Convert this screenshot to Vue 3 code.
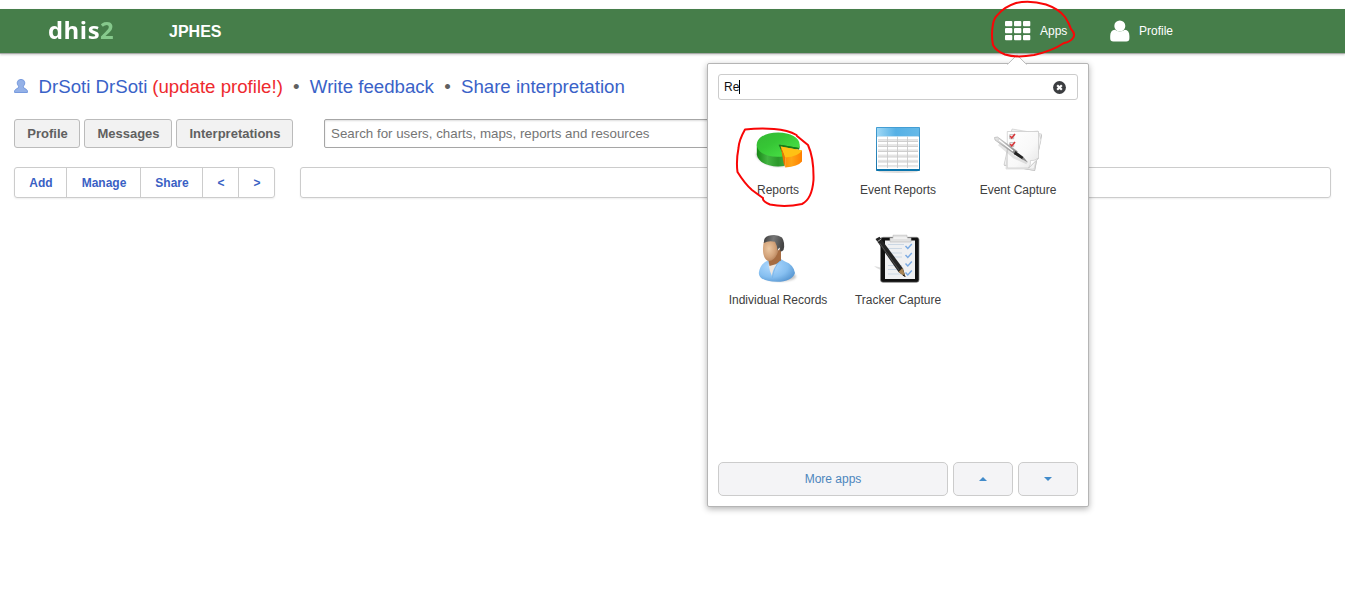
<script setup>
import { ref } from 'vue'

const query = ref('Re')
const tabs = [
  { label: 'Profile', width: 66 },
  { label: 'Messages', width: 88 },
  { label: 'Interpretations', width: 117 },
]
const actions = [
  { label: 'Add', width: 52 },
  { label: 'Manage', width: 74 },
  { label: 'Share', width: 62 },
  { label: '<', width: 36 },
  { label: '>', width: 35 },
]
const apps = [
  { name: 'Reports', icon: 'pie' },
  { name: 'Event Reports', icon: 'table' },
  { name: 'Event Capture', icon: 'paper' },
  { name: 'Individual Records', icon: 'person' },
  { name: 'Tracker Capture', icon: 'clipboard' },
]
const cells = [0, 9, 18]
</script>

<template>
  <div class="page">
    <header class="bar">
      <div class="logo">dhis<span>2</span></div>
      <div class="title">JPHES</div>
      <nav class="menu">
        <a class="entry apps-entry">
          <svg width="26" height="20" viewBox="0 0 26 20" fill="#fff">
            <template v-for="x in cells" :key="x">
              <rect v-for="y in [0, 7, 14]" :key="y" :x="x" :y="y" width="7.300" height="5.300" rx="1" />
            </template>
          </svg>
          <span>Apps</span>
        </a>
        <a class="entry profile-entry">
          <svg width="20" height="22" viewBox="0 0 20 22" fill="#fff">
            <path d="M5 9.800Q.2 10.300.2 16v2.300Q.2 21.500 3.300 21.500h13Q19.400 21.500 19.400 18.300V16Q19.400 10.300 14.800 9.800Q12.800 11.500 9.800 11.500T5 9.800Z" />
            <circle cx="9.800" cy="6" r="5.500" />
          </svg>
          <span>Profile</span>
        </a>
      </nav>
    </header>

    <main class="content">
      <div class="links">
        <svg class="user" width="15" height="16" viewBox="0 0 15 16">
          <path d="M.6 13.500V11.800Q1 10.300 4.200 9L4.700 7.200Q3.200 6 3.200 3.800Q3.500.4 7 .4T10.800 3.800Q10.800 6 9.300 7.200L9.800 9Q13 10.300 13.400 11.800V13.500Z" fill="#94b1e7" stroke="#779ade" />
        </svg>
        <a class="name">DrSoti DrSoti</a>
        <a class="update">(update profile!)</a>
        <i>•</i>
        <a>Write feedback</a>
        <i>•</i>
        <a>Share interpretation</a>
      </div>

      <div class="tabs">
        <button v-for="t in tabs" :key="t.label" :style="{ width: t.width + 'px' }">{{ t.label }}</button>
        <input class="search" placeholder="Search for users, charts, maps, reports and resources" />
      </div>

      <div class="dash">
        <div class="actions">
          <a v-for="a in actions" :key="a.label" :style="{ width: a.width + 'px' }">{{ a.label }}</a>
        </div>
        <div class="strip"></div>
      </div>
    </main>

    <section class="popup">
      <svg class="arrow" width="20" height="11" viewBox="0 0 20 11">
        <path d="M.5 10.500L10 .8L19.500 10.500" fill="#fff" stroke="#bbb" />
        <path d="M1.500 10.500h17" stroke="#fff" stroke-width="1.500" />
      </svg>
      <div class="filter">
        <span class="typed">{{ query }}</span>
        <svg width="13" height="13" viewBox="0 0 13 13">
          <circle cx="6.500" cy="6.500" r="6.400" fill="#3b3d40" />
          <path d="M4.200 4.200l4.600 4.600M8.800 4.200L4.200 8.800" stroke="#fff" stroke-width="2.200" />
        </svg>
      </div>

      <div class="grid">
        <div v-for="app in apps" :key="app.name" class="app">
          <svg v-if="app.icon === 'pie'" width="48" height="48" viewBox="0 0 48 48">
            <defs>
              <linearGradient id="pieTop" x2="1" y2="1"><stop stop-color="#35b834" /><stop offset=".4" stop-color="#36c635" /><stop offset="1" stop-color="#4fe84c" /></linearGradient>
              <linearGradient id="pieSide"><stop stop-color="#168715" /><stop offset=".25" stop-color="#43b442" /><stop offset=".5" stop-color="#2b982a" /><stop offset="1" stop-color="#6ad068" /></linearGradient>
              <linearGradient id="slice"><stop stop-color="#ff8300" /><stop offset=".5" stop-color="#ffa516" /><stop offset="1" stop-color="#ff8000" /></linearGradient>
              <filter id="blur"><feGaussianBlur stdDeviation="1.200" /></filter>
            </defs>
            <path d="M1.500 27Q4 37 22 40.500L32 40Z" fill="#777" opacity=".6" filter="url(#blur)" />
            <path d="M2.800 18.500v10C4 37 16 42 30.500 40V29L45.500 22V18.500Z" fill="url(#pieSide)" />
            <path d="M24.500 19L45.300 23.500V20L30 17Z" fill="#157115" />
            <path d="M24.500 18.500L30 30.200C15 32.500 2.800 27 2.800 18.500C2.800 11.500 12 6.500 24.200 6.500S45.600 11.500 45.600 18.500L45.200 22Z" fill="url(#pieTop)" />
            <path d="M24.500 18.500L30 30.200V37L27.300 21.500L45 23.500V22Z" fill="#187c18" />
            <path d="M26.700 20.500L31.200 31.500V41.500Q44 40.500 48 35.500V24.500Z" fill="url(#slice)" />
            <path d="M26.700 20.500L48 24.500Q44.500 30.500 31.200 31.500Z" fill="#ffc114" />
            <path d="M26.700 20.500L31.200 31.500V41.300L29.700 37.500Z" fill="#ed7500" />
          </svg>

          <svg v-else-if="app.icon === 'table'" width="48" height="48" viewBox="0 0 48 48">
            <defs>
              <linearGradient id="tabHead"><stop stop-color="#9fd8f5" /><stop offset=".45" stop-color="#55b0e5" /><stop offset="1" stop-color="#65b9e8" /></linearGradient>
              <linearGradient id="tabBody" y2="1" x2="0"><stop stop-color="#fff" /><stop offset=".45" stop-color="#fff" /><stop offset=".55" stop-color="#e2e2e2" /><stop offset="1" stop-color="#ececec" /></linearGradient>
              <linearGradient id="tabEdge" y2="1" x2="0"><stop stop-color="#449ed4" /><stop offset="1" stop-color="#1673a9" /></linearGradient>
            </defs>
            <ellipse cx="24" cy="45.500" rx="20" ry="1.500" fill="#bbb" opacity=".5" />
            <rect x="2" y="1" width="44" height="44" rx=".8" fill="url(#tabEdge)" />
            <rect x="3" y="2" width="42" height="8.500" fill="url(#tabHead)" />
            <rect x="3" y="10.500" width="42" height="32.500" fill="#fff" />
            <rect v-for="r in 6" :key="r" x="4" :y="5.600 + r * 5.100" width="40" height="5.100" fill="url(#tabBody)" />
            <path d="M4 15.500h40M4 20.500h40M4 25.500h40M4 31h40M4 36h40M13.500 10.500v31.500M23.500 10.500v31.500M33.500 10.500v31.500" stroke="#cbcbcb" stroke-width=".9" />
            <path d="M3 44h42" stroke="#0876ae" stroke-width="1.300" />
          </svg>

          <svg v-else-if="app.icon === 'paper'" width="48" height="48" viewBox="0 0 48 48">
            <defs>
              <linearGradient id="sheet" x2="1" y2="1"><stop stop-color="#fff" /><stop offset=".6" stop-color="#f8f8f8" /><stop offset="1" stop-color="#e5e5e5" /></linearGradient>
              <linearGradient id="penBody" x2="1" y2="1"><stop stop-color="#eee" /><stop offset="1" stop-color="#777" /></linearGradient>
              <filter id="sheetShade"><feGaussianBlur stdDeviation=".7" /></filter>
            </defs>
            <path d="M18 4L48 9L41 45L10 39.500Z" fill="#888" opacity=".6" filter="url(#sheetShade)" />
            <path d="M18 3L47.500 8L40.500 44.500L10 39Z" fill="#f1f1f1" stroke="#c4c4c4" stroke-width=".6" />
            <path d="M15 8L44 5L47 14L40 43L12 43Z" fill="#f3f3f3" stroke="#c4c4c4" stroke-width=".5" />
            <path d="M13.300 5.500H44.500V32.500L35 42H13.300Z" fill="url(#sheet)" stroke="#c8c8c8" stroke-width=".7" />
            <path d="M44.500 32Q39.500 35.500 36.500 34.500Q37 39 34.500 42Z" fill="#fff" stroke="#c4c4c4" stroke-width=".6" />
            <g fill="none">
              <path d="M15.700 8.700h4v4h-4ZM15.700 16.700h4v4h-4Z" fill="#fff" stroke="#aaa" stroke-width=".8" />
              <path d="M16.200 10l1.500 2L21 8M16.200 18l1.500 2L21 16" stroke="#d63639" stroke-width="1.600" />
            </g>
            <path d="M5 18L20 31L33 37" stroke="#999" stroke-width="3" opacity=".25" fill="none" />
            <path d="M.5 11.500L3.500 11L23.500 25.500L21 28.500L1 14Z" fill="url(#penBody)" stroke="#999" stroke-width=".5" />
            <path d="M21.500 25L29.500 31L28.500 33.500L19.800 28Z" fill="#222" />
            <path d="M29.500 31L34 36.500L28 33.300Z" fill="#888" />
            <path d="M5 14L19 25" stroke="#fff" stroke-width="1.200" />
          </svg>

          <svg v-else-if="app.icon === 'person'" width="48" height="48" viewBox="0 0 48 48">
            <defs>
              <radialGradient id="shirt" cx=".35" cy=".35" r=".75"><stop stop-color="#b0d9ff" /><stop offset=".6" stop-color="#86bff0" /><stop offset="1" stop-color="#5594d0" /></radialGradient>
              <radialGradient id="skin" cx=".4" cy=".4" r=".75"><stop stop-color="#ecc8a2" /><stop offset=".55" stop-color="#d3a37a" /><stop offset="1" stop-color="#a8744d" /></radialGradient>
              <linearGradient id="hair" x2="1" y2=".2"><stop stop-color="#3a3a3a" /><stop offset=".5" stop-color="#777" /><stop offset="1" stop-color="#454545" /></linearGradient>
              <filter id="personShade"><feGaussianBlur stdDeviation="1" /></filter>
            </defs>
            <ellipse cx="26" cy="40.500" rx="16" ry="5" fill="#888" opacity=".5" filter="url(#personShade)" />
            <path d="M15 24Q6 27 4.800 37Q5 45.500 23 45.800Q38 45.800 41 37Q39.500 28.500 31 25.500L25 22Z" fill="url(#shirt)" />
            <path d="M14.500 28.500Q15.500 35 18 40Q18.500 33 23 28.500Z" fill="#eee6df" />
            <path d="M15.500 22L27 12V24.500Q23 28.500 15.500 30L14.500 25Z" fill="#a66c41" />
            <path d="M26 25Q20 30.500 18.300 42" stroke="#79b3e5" fill="none" stroke-width=".8" />
            <path d="M9.800 6Q8.500 11 9.200 17Q10.500 24.500 15 25Q21 24.500 24 16V6Q16 3 9.800 6Z" fill="url(#skin)" />
            <path d="M9.800 7Q9.500 1 14.500-.3Q23-2.500 28 1.500Q31.500 7 29.500 14Q28 15.500 26.500 15.500L25.500 11.500Q24 13 23.500 14.500Q23 9 21 5.800Q14.500 4.200 9.800 7Z" fill="url(#hair)" />
          </svg>

          <svg v-else width="48" height="48" viewBox="0 0 48 48">
            <path d="M0 30Q5 35 17 36L17 34Z" fill="#bbb" opacity=".5" />
            <rect x="6.500" y="1.300" width="38.500" height="45" rx="2.500" fill="#111" stroke="#888" stroke-width=".7" />
            <rect x="11" y="4.500" width="30" height="38.500" fill="#eff0f2" />
            <path d="M14 8.500h16M14 12.500h14M14 17h14M14 21h14M14 29.500h14M14 33.500h14M14 38h14" stroke="#cbd7e4" stroke-width="1.200" />
            <path d="M16 6V2h3V-.8h14V2h4v4Z" fill="#e2e2e2" stroke="#bbb" stroke-width=".6" />
            <path d="M19.500 2h14" stroke="#fff" />
            <path v-for="y in [8.500, 17.500, 26, 35]" :key="y" :d="`M31.500 ${y + 1.500}l2.300 2.500 4-4.500`" fill="none" stroke="#79a9e2" stroke-width="1.400" />
            <path d="M1.500 3L5.500.8L29 32.500L31.500 41L24.500 36Z" fill="#242424" />
            <path d="M5.500 7L25 34" stroke="#4c4c4c" stroke-width="1" />
            <path d="M28.500 32L31.500 41L24.500 36Z" fill="#a88352" />
            <path d="M30 38.500L31.500 41L28.500 39.500Z" fill="#111" />
            <path d="M3.300 5.700L7.200 3" stroke="#aaa" stroke-width="1" />
          </svg>
          <span>{{ app.name }}</span>
        </div>
      </div>

      <div class="foot">
        <button class="more">More apps</button>
        <button><svg width="8" height="4" viewBox="0 0 8 4"><path d="M0 4L4 0L8 4Z" fill="#428bca" /></svg></button>
        <button><svg width="8" height="4" viewBox="0 0 8 4"><path d="M0 0H8L4 4Z" fill="#428bca" /></svg></button>
      </div>
    </section>

    <svg class="marks" width="1345" height="602" viewBox="0 0 1345 602" fill="none" stroke="#f90606" stroke-width="2" stroke-linejoin="round" stroke-linecap="round">
      <path d="M998 14.500Q1004 7 1016 3Q1030 0 1046 4.500Q1059 9 1065 17Q1069 23 1071 29Q1076 34 1073 38Q1070 42 1064 43Q1052 51 1034 55Q1016 58 1005 54.500Q996 51 993 45Q991 35 993 24Q994 18 998 14.500Z" />
      <path d="M796.500 135Q788 130 774 129Q760 128 745 129.500Q739 140 738.500 148Q736 161 737.500 172Q745 184 752 190Q760 196 763 198Q762 201 770 204.500Q785 207.500 802 204Q812 199 813.500 180Q814 158 808 145Q803 141 797 136" />
    </svg>
  </div>
</template>

<style>
body { margin: 0; background: #fff; }
</style>

<style scoped>
* { box-sizing: border-box; }
.page {
  position: relative;
  width: 1345px;
  height: 602px;
  padding-top: 9px;
  overflow: hidden;
  background: #fff;
  font-family: "Liberation Sans", Arial, sans-serif;
}
.bar {
  display: flex;
  align-items: center;
  height: 45px;
  padding-left: 48px;
  background: #467e4a;
  border-bottom: 1px solid #a8aaa8;
  box-shadow: 0 1px 2px rgba(0, 0, 0, .18);
  color: #fff;
}
.logo {
  width: 121px;
  padding-bottom: 1px;
  font: 700 22.5px/43px "Open Sans", sans-serif;
  letter-spacing: .5px;
  transform: scaleX(1.06);
  transform-origin: left;
}
.logo span { color: #86c98c; }
.title { width: 836px; padding-top: 1px; font-size: 16px; font-weight: 700; line-height: 44px; }
.menu { display: flex; }
.entry { display: flex; align-items: center; font-size: 12px; }
.apps-entry { width: 105px; gap: 9px; }
.profile-entry { gap: 9px; }
.content { padding: 22px 14px 0; }
.links {
  display: flex;
  align-items: center;
  height: 22px;
  font-size: 18.67px;
  color: #3a62c8;
  white-space: nowrap;
}
.user { margin-right: 9.500px; }
.name { width: 109px; }
.update { margin-left: 4.700px; color: #ee2a2e; }
.links i { width: 27px; text-align: center; font-style: normal; color: #606060; }
.tabs { display: flex; gap: 4px; margin-top: 21px; }
.tabs button {
  height: 29px;
  padding: 0 0 0 1px;
  border: 1px solid #bbb;
  border-radius: 3px;
  background: #f2f2f2;
  color: #606060;
  font: 700 13px "Liberation Sans", sans-serif;
}
.search {
  width: 500px;
  height: 29px;
  margin-left: 27px;
  padding: 0 6px;
  border: 1px solid #a6a6a6;
  border-radius: 2px;
  box-shadow: inset 0 1px 2px #ddd;
  font: 13.33px "Liberation Sans", sans-serif;
}
.search::placeholder { color: #757575; }
.dash { display: flex; gap: 25px; margin-top: 19px; }
.actions {
  display: flex;
  width: 261px;
  height: 31px;
  border: 1px solid #ccc;
  border-radius: 3px;
  box-shadow: 0 1px 2px #eee;
}
.actions a {
  flex: none;
  padding-left: 1px;
  border-right: 1px solid #ccc;
  text-align: center;
  font-size: 12px;
  font-weight: 700;
  line-height: 30px;
  color: #3a5fc4;
}
.actions a:last-child { border-right: 0; }
.strip { flex: 1; height: 31px; border: 1px solid #ccc; border-radius: 3px; box-shadow: 0 1px 2px #eee; }
.popup {
  position: absolute;
  left: 707px;
  top: 63px;
  width: 382px;
  height: 444px;
  padding: 10px;
  display: flex;
  flex-direction: column;
  background: #fff;
  border: 1px solid #b5b5b5;
  border-radius: 2px;
  box-shadow: 0 2px 6px rgba(0, 0, 0, .3);
}
.arrow { position: absolute; left: 299px; top: -10px; }
.filter {
  display: flex;
  align-items: center;
  justify-content: space-between;
  height: 26px;
  padding: 0 11px 0 5px;
  border: 1px solid #ccc;
  border-radius: 3px;
}
.typed { border-right: 1px solid #000; font-size: 12px; line-height: 14px; color: #111; }
.grid { display: grid; grid-template-columns: repeat(3, 120px); grid-auto-rows: 110px; padding-top: 26px; }
.app { display: flex; flex-direction: column; align-items: center; font-size: 12px; color: #404040; }
.app svg { flex: none; overflow: visible; }
.app span { margin-top: 9px; line-height: 14px; white-space: nowrap; }
.foot { display: flex; gap: 5px; margin-top: auto; }
.foot button {
  width: 60px;
  height: 34px;
  padding: 0;
  display: flex;
  align-items: center;
  justify-content: center;
  border: 1px solid #ccc;
  border-radius: 5px;
  background: #f4f4f6;
  color: #4d86bd;
  font: 12px "Liberation Sans", sans-serif;
}
.foot .more { width: 230px; }
.marks { position: absolute; left: 0; top: 0; pointer-events: none; }
</style>
